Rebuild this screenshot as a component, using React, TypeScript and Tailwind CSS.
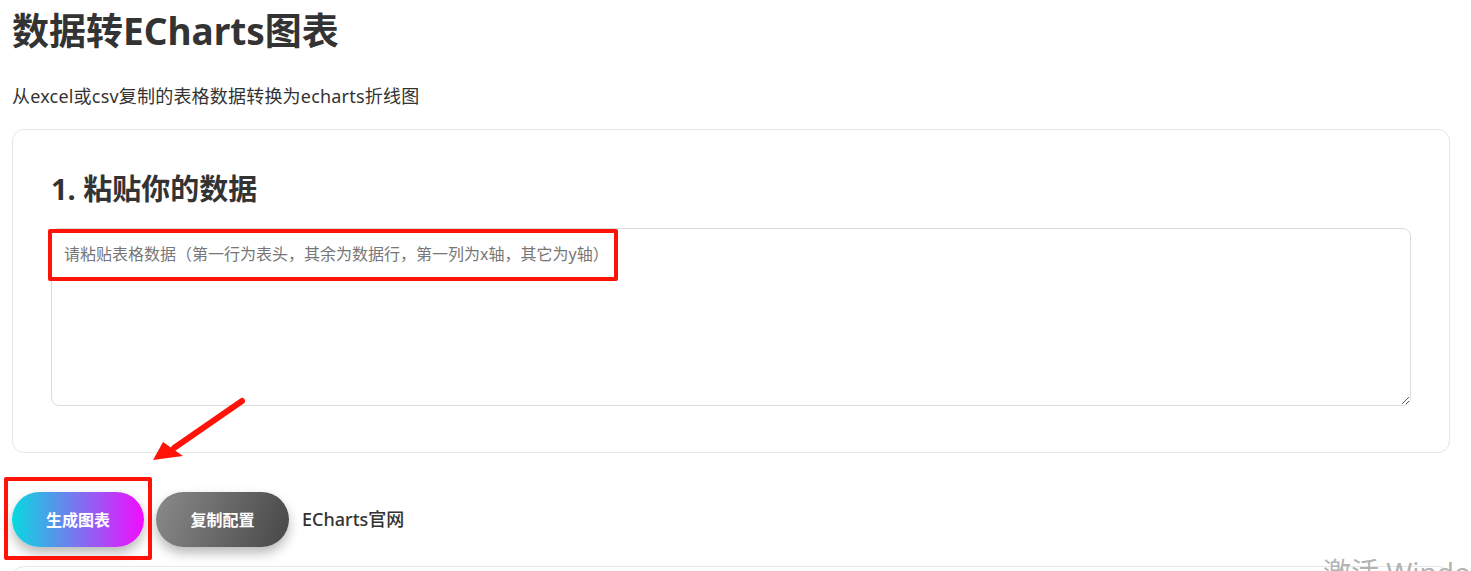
const FONT = "font-['Noto_Sans','Noto_Sans_CJK_SC',sans-serif]";

function Annotations() {
  return (
    <>
      <div className="pointer-events-none absolute left-[48px] top-[229px] h-[52px] w-[570px] rounded-[2px] border-4 border-[#ff1208]" />
      <div className="pointer-events-none absolute left-[4px] top-[477px] h-[83px] w-[148px] rounded-[2px] border-4 border-[#ff1208]" />
      <svg className="pointer-events-none absolute left-0 top-0" width="300" height="500" viewBox="0 0 300 500">
        <line x1="242" y1="401" x2="174" y2="448" stroke="#ff1208" strokeWidth="6" strokeLinecap="round" />
        <polygon points="153,460 163,442 183,456" fill="#ff1208" />
      </svg>
    </>
  );
}

export default function App() {
  return (
    <div className={`relative h-[571px] overflow-hidden bg-white pl-3 pr-[21px] text-[#333] ${FONT}`}>
      <h1 className="pt-[3px] text-[37px] font-bold leading-[55px]">数据转ECharts图表</h1>
      <p className="mt-[25px] text-[18px] leading-[26px] tracking-[0.2px]">从excel或csv复制的表格数据转换为echarts折线图</p>

      {/* Step 1 card */}
      <div className="mt-[20px] rounded-xl border border-[#e6e6e6] px-[38px] pb-[46px] pt-[38px]">
        <h2 className="text-[29px] font-bold leading-[42px]">1. 粘贴你的数据</h2>
        <textarea
          className="mt-[18px] block h-[178px] w-full rounded-lg border border-[#dcdcdc] px-[12px] py-[13px] text-[16px] leading-[24px] outline-none placeholder:text-[#777]"
          placeholder="请粘贴表格数据（第一行为表头，其余为数据行，第一列为x轴，其它为y轴）"
        />
      </div>

      {/* Actions */}
      <div className="mt-[39px] flex items-center gap-3">
        <button className="h-[55px] w-[132px] rounded-full bg-[linear-gradient(to_right,#08d9e0,#f20cff)] text-[16px] font-bold text-white shadow-[0_6px_12px_rgba(0,0,0,0.28)]">
          生成图表
        </button>
        <button className="h-[55px] w-[133px] rounded-full bg-[linear-gradient(110deg,#8a8a8a,#474747)] text-[16px] font-bold text-white shadow-[0_6px_12px_rgba(0,0,0,0.28)]">
          复制配置
        </button>
        <a className="ml-[1px] text-[18px] font-medium text-[#333]">ECharts官网</a>
      </div>

      {/* Next card (cut off) */}
      <div className="mt-[19px] h-[40px] rounded-xl border border-[#e6e6e6]" />

      <Annotations />

      <div className="pointer-events-none absolute left-[1323px] top-[552px] whitespace-nowrap text-[28px] leading-[40px] text-[#b3b3b3]">
        激活 Windows
      </div>
    </div>
  );
}
